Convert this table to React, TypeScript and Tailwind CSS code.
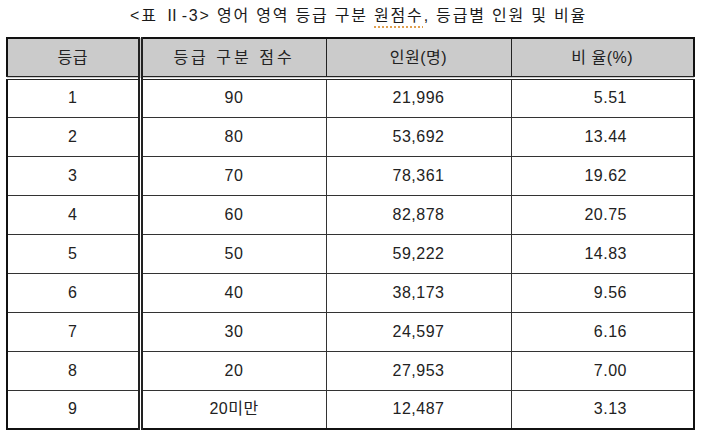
const ROWS = [
  { grade: "1", score: "90", count: "21,996", ratio: "5.51" },
  { grade: "2", score: "80", count: "53,692", ratio: "13.44" },
  { grade: "3", score: "70", count: "78,361", ratio: "19.62" },
  { grade: "4", score: "60", count: "82,878", ratio: "20.75" },
  { grade: "5", score: "50", count: "59,222", ratio: "14.83" },
  { grade: "6", score: "40", count: "38,173", ratio: "9.56" },
  { grade: "7", score: "30", count: "24,597", ratio: "6.16" },
  { grade: "8", score: "20", count: "27,953", ratio: "7.00" },
  { grade: "9", score: "20미만", count: "12,487", ratio: "3.13" },
];

export default function App() {
  return (
    <div
      className="w-[713px] h-[445px] bg-white text-[#222] overflow-hidden"
      style={{ fontFamily: '"Liberation Sans", "Noto Sans CJK KR", sans-serif' }}
    >
      {/* Caption */}
      <p className="h-[36px] pt-[4px] pl-[4px] text-center text-[16px] leading-[24px] tracking-[1.8px] text-[#1a1a1a] whitespace-pre">
        {"<표 Ⅱ-3> 영어 영역 등급 구분 "}
        <span className="underline decoration-dotted decoration-[#e0a050] decoration-2 underline-offset-[5px]">원점수</span>
        {", 등급별 인원 및 비율"}
      </p>

      <table className="ml-[6px] mt-[1px] w-[689px] table-fixed border-collapse border-2 border-[#111] text-[16px] tracking-[0.5px]">
        <colgroup>
          <col className="w-[133px]" />
          <col className="w-[186px]" />
          <col className="w-[185px]" />
          <col />
        </colgroup>
        <thead>
          <tr className="h-[40px] bg-[#cbcbcb]">
            <th className="font-normal border-b-[4px] border-double border-[#222] border-r-[5px]">등급</th>
            <th className="font-normal border-b-[4px] border-double border-[#222] border-r tracking-[3px]">등급 구분 점수</th>
            <th className="font-normal border-b-[4px] border-double border-[#222] border-r">인원(명)</th>
            <th className="font-normal border-b-[4px] border-double border-[#222] whitespace-pre">비 율(%)</th>
          </tr>
        </thead>
        <tbody>
          {ROWS.map((r) => (
            <tr key={r.grade} className="h-[39px]">
              <td className="text-center border-b border-[#333] border-r-[5px] border-r-[#222] [border-right-style:double]">{r.grade}</td>
              <td className="text-center border-b border-r border-[#333]">{r.score}</td>
              <td className="text-center border-b border-r border-[#333]">{r.count}</td>
              <td className="text-right pr-[66px] border-b border-[#333]">{r.ratio}</td>
            </tr>
          ))}
        </tbody>
      </table>
    </div>
  );
}
